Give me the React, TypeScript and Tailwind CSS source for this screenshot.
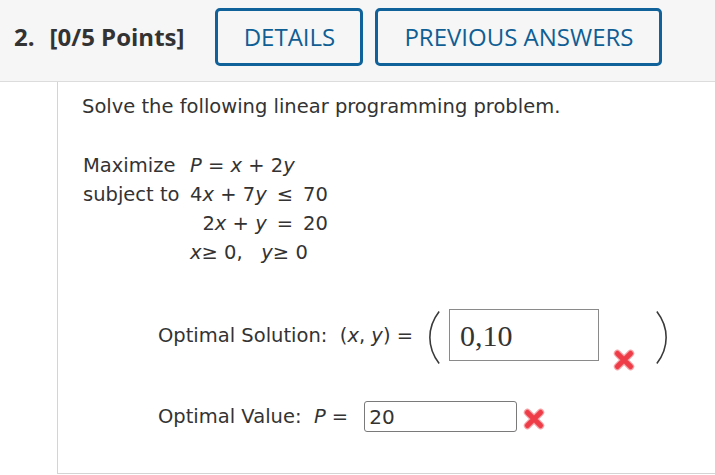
import React from 'react';

function RedX({ className }: { className?: string }) {
  return (
    <svg viewBox="0 0 20 20" className={className} aria-hidden="true">
      <g strokeLinecap="round">
        <path d="M4 4 L16 16 M16 4 L4 16" stroke="#f7a0a4" strokeWidth="6.5" />
        <path d="M4 4 L16 16 M16 4 L4 16" stroke="#ee3d48" strokeWidth="4.5" />
      </g>
    </svg>
  );
}

function Paren({ right }: { right?: boolean }) {
  return (
    <svg viewBox="0 0 14 58" className="w-[13px] h-[57px]" aria-hidden="true">
      <path
        d={right ? 'M2 1 Q12 14 12 29 Q12 44 2 57' : 'M12 1 Q2 14 2 29 Q2 44 12 57'}
        fill="none"
        stroke="#3a3a3a"
        strokeWidth="1.7"
      />
    </svg>
  );
}

const v = 'italic';

export default function App() {
  return (
    <div className="w-[715px] h-[475px] overflow-hidden bg-white text-[#333]">
      {/* Question header */}
      <div className="h-[82px] bg-[#f6f6f6] border-b border-[#dcdcdc] flex items-start pt-2 pl-[14px] font-['Open_Sans',sans-serif]">
        <div className="h-[58px] flex items-center text-[24px] font-bold text-[#333]">
          <span>2.</span>
          <span className="ml-[15px]">[0/5 Points]</span>
        </div>
        <button className="ml-[31px] w-[148px] h-[58px] border-[3px] border-[#0f629a] rounded-[5px] text-[24px] font-normal text-[#0f5e94] bg-transparent">
          DETAILS
        </button>
        <button className="ml-[12px] w-[287px] h-[58px] border-[3px] border-[#0f629a] rounded-[5px] text-[24px] font-normal text-[#0f5e94] bg-transparent">
          PREVIOUS ANSWERS
        </button>
      </div>

      {/* Question body */}
      <div className="ml-[57px] h-[392px] border-l border-b border-[#d4d4d4] pl-[24px] pt-[10px] font-['DejaVu_Sans',sans-serif] text-[19.5px] text-[#333]">
        <p>Solve the following linear programming problem.</p>

        <div className="mt-[30px] ml-px flex leading-[29px]">
          <div className="w-[107px] flex flex-col">
            <span>Maximize</span>
            <span>subject to</span>
          </div>
          <div className="flex flex-col items-start">
            <span>
              <span className={v}>P</span> = <span className={v}>x</span> + 2<span className={v}>y</span>
            </span>
            <div className="inline-grid grid-cols-[auto_auto_auto] gap-x-[10px]">
              <span className="justify-self-end">
                4<span className={v}>x</span> + 7<span className={v}>y</span>
              </span>
              <span className="justify-self-center">≤</span>
              <span className="justify-self-end">70</span>
              <span className="justify-self-end">
                2<span className={v}>x</span> + <span className={v}>y</span>
              </span>
              <span className="justify-self-center">=</span>
              <span className="justify-self-end">20</span>
            </div>
            <span>
              <span className={v}>x</span>≥ 0,&nbsp;&nbsp; <span className={v}>y</span>≥ 0
            </span>
          </div>
        </div>

        {/* Optimal solution */}
        <div className="mt-[42px] ml-[76px] flex items-start">
          <div className="h-[52px] flex items-center">
            <span>
              Optimal Solution:&nbsp; (<span className={v}>x</span>, <span className={v}>y</span>) =
            </span>
          </div>
          <span className="ml-[15px]">
            <Paren />
          </span>
          <div className="ml-[8px] w-[150px] h-[52px] border border-[#8a8a8a] flex items-center pl-[10px] font-['Liberation_Serif',serif] text-[30px] text-[#333]">
            0,10
          </div>
          <RedX className="ml-[14px] mt-[40px] w-[22px] h-[22px]" />
          <span className="ml-[20px]">
            <Paren right />
          </span>
        </div>

        {/* Optimal value */}
        <div className="mt-[30px] ml-[76px] flex items-center">
          <span>
            Optimal Value:&nbsp; <span className={v}>P</span> =
          </span>
          <div className="ml-[16px] w-[153px] h-[31px] border border-[#7a7a7a] rounded-[3px] flex items-center pl-[4px] text-[20px] text-[#333]">
            20
          </div>
          <RedX className="ml-[6px] mt-[4px] w-[22px] h-[22px]" />
        </div>
      </div>
    </div>
  );
}
